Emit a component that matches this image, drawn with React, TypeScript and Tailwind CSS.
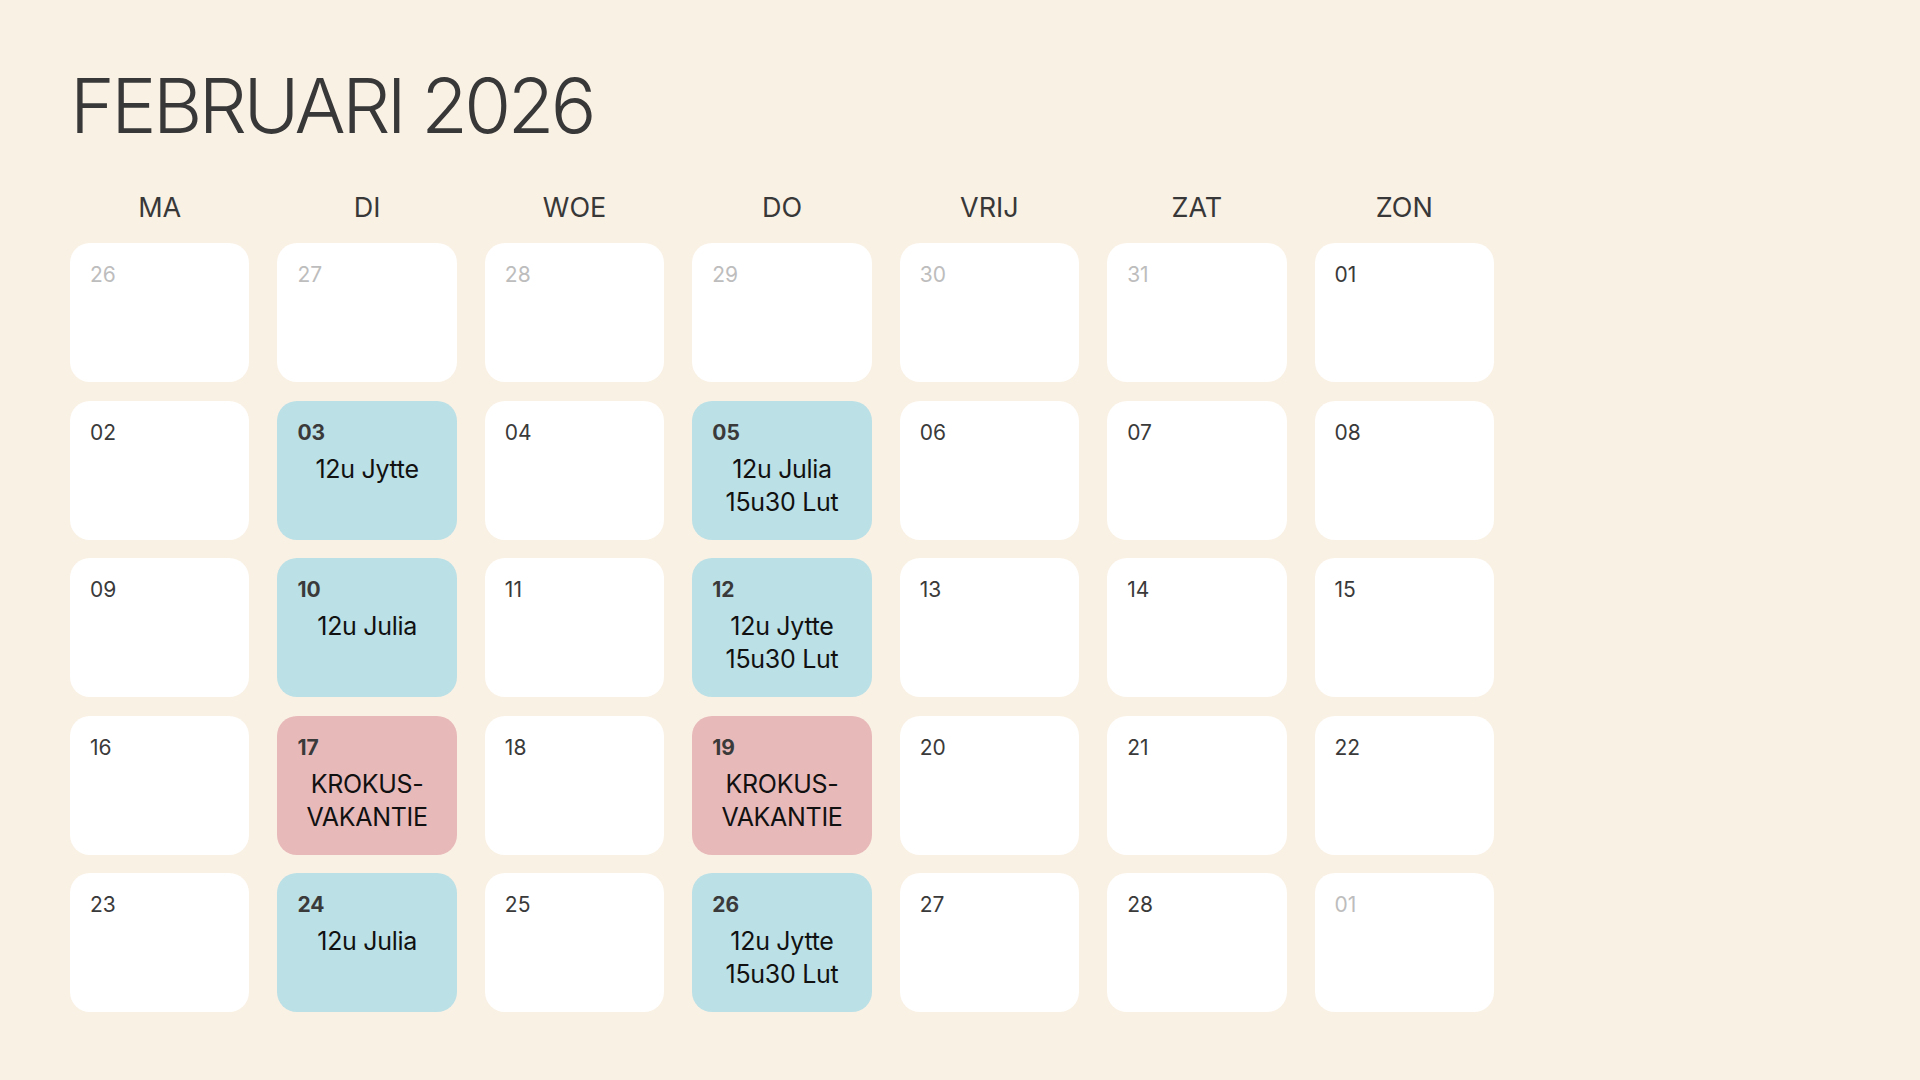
type Day = {
  n: string;
  muted?: boolean;
  tone?: "blue" | "pink";
  lines?: string[];
};

const weeks: Day[][] = [
  [
    { n: "26", muted: true },
    { n: "27", muted: true },
    { n: "28", muted: true },
    { n: "29", muted: true },
    { n: "30", muted: true },
    { n: "31", muted: true },
    { n: "01" },
  ],
  [
    { n: "02" },
    { n: "03", tone: "blue", lines: ["12u Jytte"] },
    { n: "04" },
    { n: "05", tone: "blue", lines: ["12u Julia", "15u30 Lut"] },
    { n: "06" },
    { n: "07" },
    { n: "08" },
  ],
  [
    { n: "09" },
    { n: "10", tone: "blue", lines: ["12u Julia"] },
    { n: "11" },
    { n: "12", tone: "blue", lines: ["12u Jytte", "15u30 Lut"] },
    { n: "13" },
    { n: "14" },
    { n: "15" },
  ],
  [
    { n: "16" },
    { n: "17", tone: "pink", lines: ["KROKUS-", "VAKANTIE"] },
    { n: "18" },
    { n: "19", tone: "pink", lines: ["KROKUS-", "VAKANTIE"] },
    { n: "20" },
    { n: "21" },
    { n: "22" },
  ],
  [
    { n: "23" },
    { n: "24", tone: "blue", lines: ["12u Julia"] },
    { n: "25" },
    { n: "26", tone: "blue", lines: ["12u Jytte", "15u30 Lut"] },
    { n: "27" },
    { n: "28" },
    { n: "01", muted: true },
  ],
];

const headers = ["MA", "DI", "WOE", "DO", "VRIJ", "ZAT", "ZON"];

function Cell({ day }: { day: Day }) {
  const bg =
    day.tone === "blue"
      ? "bg-[#bbe0e6]"
      : day.tone === "pink"
        ? "bg-[#e8b9b9]"
        : "bg-white";
  const num = day.muted
    ? "text-[#bdbdbd] font-normal"
    : day.tone
      ? "text-[#3a3a3a] font-bold"
      : "text-[#3a3a3a] font-normal";
  return (
    <div className={`h-[139px] rounded-[20px] ${bg} px-[20px] pt-[21px]`}>
      <div className={`text-[21px] leading-[21px] ${num}`}>{day.n}</div>
      {day.lines && (
        <div className="mt-[10px] text-center text-[25px] leading-[33px] tracking-[-0.3px] text-[#111111]">
          {day.lines.map((l) => (
            <div key={l}>{l}</div>
          ))}
        </div>
      )}
    </div>
  );
}

export default function App() {
  return (
    <div
      className="min-h-screen w-full bg-[#faf1e5] pl-[70px] pt-[67px]"
      style={{ fontFamily: "Inter, 'Noto Sans', sans-serif" }}
    >
      <h1 className="text-[76px] leading-[76px] font-light tracking-[-3.5px] text-[#383838]">
        FEBRUARI 2026
      </h1>
      <div className="mt-[51px] grid w-[1424px] grid-cols-7 gap-x-[28px]">
        {headers.map((h) => (
          <div
            key={h}
            className="text-center text-[27px] leading-[27px] text-[#383838]"
          >
            {h}
          </div>
        ))}
      </div>
      <div className="mt-[22px] grid w-[1424px] grid-cols-7 gap-x-[28px] gap-y-[18.5px]">
        {weeks.flat().map((d, i) => (
          <Cell key={i} day={d} />
        ))}
      </div>
    </div>
  );
}
